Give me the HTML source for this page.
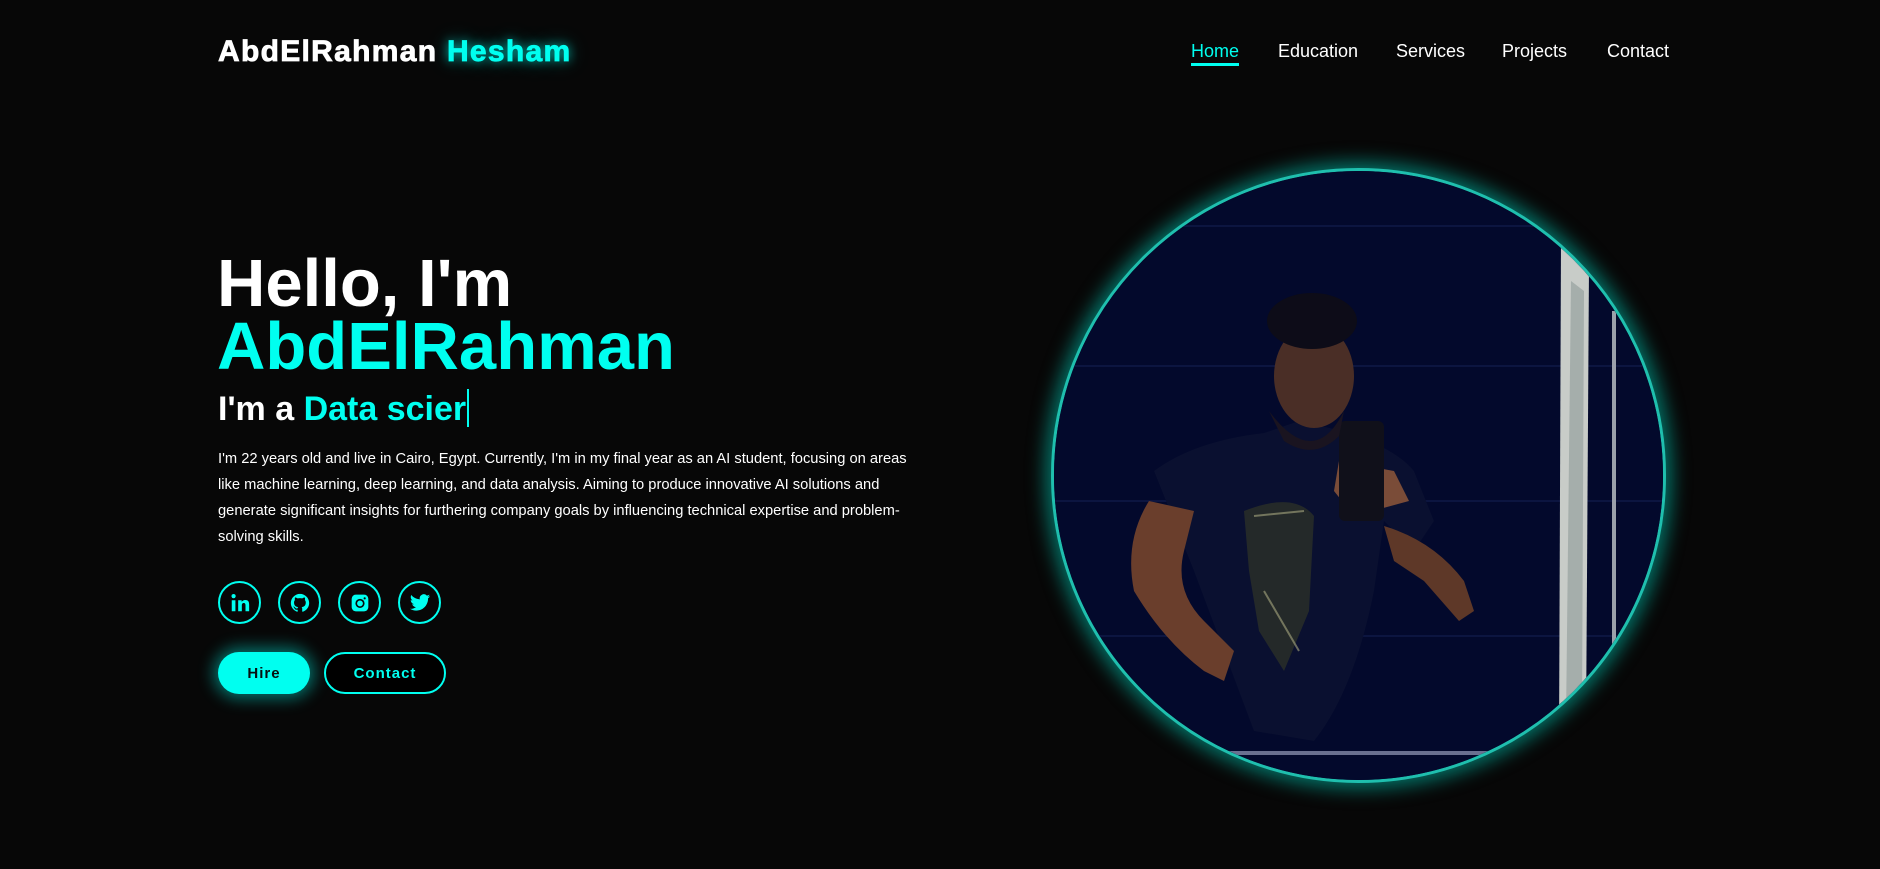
<!DOCTYPE html>
<html><head><meta charset="utf-8"><style>
*{margin:0;padding:0;box-sizing:border-box}
body{width:1880px;height:869px;background:#070707;font-family:"Liberation Sans",Arial,sans-serif;position:relative;overflow:hidden;color:#fff}
.logo{position:absolute;left:218px;top:35px;font-size:30px;font-weight:bold;white-space:nowrap;letter-spacing:1.3px;-webkit-text-stroke:0.8px currentColor}
.logo span{color:#00fff0;text-shadow:0 0 10px rgba(0,255,240,.7),0 0 20px rgba(0,255,240,.4)}
.nav a{position:absolute;top:41px;font-size:18px;color:#fff;text-decoration:none}
.nav a.act{color:#00fff0}
.nav a.act:after{content:"";position:absolute;left:0;right:0;top:22px;height:3px;background:#00fff0}
.h1{position:absolute;left:217px;font-size:67px;font-weight:bold;white-space:nowrap;line-height:1}
.sub{position:absolute;left:218px;top:389px;font-size:34px;font-weight:bold;white-space:nowrap}
.sub span{color:#00fff0}
.caret{display:inline-block;width:2px;height:38px;background:#00fff0;vertical-align:-7px;margin-left:1px}
p{position:absolute;left:218px;top:446px;width:705px;font-size:14.7px;line-height:26px;color:#fff}
.ic{position:absolute;top:581px;width:43px;height:43px;border:2px solid #00fff0;border-radius:50%;display:flex;align-items:center;justify-content:center}
.btn{position:absolute;top:652px;height:42px;border-radius:21px;font-size:15px;font-weight:bold;letter-spacing:1px;display:flex;align-items:center;justify-content:center}
.photo{position:absolute;left:1051px;top:168px;width:615px;height:615px;border-radius:50%;border:3px solid #1fbfae;box-shadow:0 0 18px 6px rgba(0,200,180,.55);overflow:hidden;background:#040a2e}
</style></head><body>
<div class="logo">AbdElRahman <span>Hesham</span></div>
<div class="nav">
<a class="act" style="left:1191px">Home</a>
<a style="left:1278px">Education</a>
<a style="left:1396px">Services</a>
<a style="left:1502px">Projects</a>
<a style="left:1607px">Contact</a>
</div>
<div class="h1" style="top:250px">Hello, I'm</div>
<div class="h1" style="top:313px;color:#00fff0">AbdElRahman</div>
<div class="sub">I'm a <span>Data scier</span><i class="caret"></i></div>
<p>I'm 22 years old and live in Cairo, Egypt. Currently, I'm in my final year as an AI student, focusing on areas like machine learning, deep learning, and data analysis. Aiming to produce innovative AI solutions and generate significant insights for furthering company goals by influencing technical expertise and problem-solving skills.</p>

<div class="ic" style="left:218px"><svg width="22" height="22" viewBox="0 0 24 24" fill="#00fff0"><rect x="3" y="9" width="4" height="12"/><circle cx="5" cy="4.5" r="2.3"/><path d="M10 9h3.8v1.8c.6-1.1 2-2.1 4-2.1 3.4 0 4.2 2.2 4.2 5.2V21h-4v-6.2c0-1.5-.3-2.8-1.9-2.8s-2.1 1.2-2.1 2.8V21h-4z"/></svg></div>
<div class="ic" style="left:278px"><svg width="22" height="22" viewBox="0 0 24 24" fill="#00fff0"><path d="M12 2C6.5 2 2 6.5 2 12c0 4.4 2.9 8.2 6.8 9.5.5.1.7-.2.7-.5v-1.7c-2.8.6-3.4-1.3-3.4-1.3-.5-1.2-1.1-1.5-1.1-1.5-.9-.6.1-.6.1-.6 1 .1 1.5 1 1.5 1 .9 1.5 2.4 1.1 2.9.8.1-.7.4-1.1.6-1.300-2.2-.3-4.6-1.1-4.6-5 0-1.1.4-2 1-2.7-.1-.3-.4-1.3.1-2.7 0 0 .8-.3 2.8 1 .8-.2 1.7-.3 2.5-.3s1.7.1 2.5.3c1.900-1.3 2.8-1 2.8-1 .5 1.4.2 2.4.1 2.7.6.7 1 1.6 1 2.7 0 3.9-2.4 4.7-4.6 5 .4.3.7.9.7 1.9V21c0 .3.2.6.7.5C19.1 20.2 22 16.4 22 12 22 6.5 17.5 2 12 2z"/></svg></div>
<div class="ic" style="left:338px"><svg width="20" height="20" viewBox="0 0 24 24"><rect x="2" y="2" width="20" height="20" rx="5" fill="#00fff0"/><circle cx="12" cy="12.5" r="4.5" fill="none" stroke="#070707" stroke-width="2"/><circle cx="17.6" cy="6.4" r="1.3" fill="#070707"/></svg></div>
<div class="ic" style="left:398px"><svg width="22" height="22" viewBox="0 0 24 24" fill="#00fff0"><path d="M23 4.6c-.8.4-1.7.6-2.6.7.9-.6 1.6-1.4 2-2.5-.9.5-1.9.9-2.9 1.1a4.5 4.5 0 0 0-7.7 4.1C8 7.8 4.7 6 2.5 3.3c-1.2 2.1-.5 4.7 1.4 6-.7 0-1.4-.2-2-.6 0 2.2 1.5 4.1 3.6 4.5-.7.2-1.4.2-2 .1.6 1.8 2.3 3.1 4.2 3.1A9 9 0 0 1 1 18.3 12.8 12.8 0 0 0 7.9 20.3c8.3 0 12.9-6.9 12.9-12.9v-.6c.9-.6 1.6-1.4 2.2-2.2z"/></svg></div>

<div class="btn" style="left:218px;width:92px;background:#00fff0;color:#071010;box-shadow:0 0 16px 4px rgba(0,255,240,.45)">Hire</div>
<div class="btn" style="left:324px;width:122px;border:2px solid #00fff0;color:#00fff0;background:#000">Contact</div>

<div class="photo">
<svg width="615" height="615" viewBox="0 0 615 615">
<rect width="615" height="615" fill="#03092c"/>
<g stroke="#0c1540" stroke-width="2"><line x1="0" y1="55" x2="615" y2="55"/><line x1="0" y1="195" x2="615" y2="195"/><line x1="0" y1="330" x2="615" y2="330"/><line x1="0" y1="465" x2="615" y2="465"/></g>
<path d="M507 68 L535 95 L532 560 L505 575 Z" fill="#c8ccc8"/>
<path d="M517 110 L530 120 L528 540 L512 550 Z" fill="#8d9a98" opacity=".6"/>
<rect x="558" y="140" width="4" height="360" fill="#9aa0aa"/>
<rect x="150" y="580" width="320" height="4" fill="#6a7090"/>
<path d="M100 300 Q140 270 210 262 L245 250 L280 258 Q340 275 360 300 L380 350 L360 380 L330 350 L320 420 Q300 520 260 570 L200 560 L170 480 L140 400 Z" fill="#0a1030"/>
<path d="M95 330 Q70 370 80 420 Q110 470 150 500 L170 510 L180 480 L150 450 Q120 420 130 380 L140 340 Z" fill="#6a3e2c"/>
<path d="M330 355 Q380 370 410 410 L420 440 L405 450 L370 410 L340 390 Z" fill="#5e3828"/>
<path d="M285 290 L340 300 L355 330 L300 345 L280 320Z" fill="#7a4c38"/>
<rect x="285" y="250" width="45" height="100" rx="6" fill="#10101a"/>
<ellipse cx="260" cy="205" rx="40" ry="52" fill="#4a2e26"/>
<ellipse cx="258" cy="150" rx="45" ry="28" fill="#0d0c18"/>
<path d="M215 240 Q260 300 290 240 L285 265 Q260 290 230 270Z" fill="#1a1420"/>
<path d="M190 340 Q240 320 260 345 L255 440 L230 500 L205 460 L195 400Z" fill="#2a2f28" opacity=".8"/>
<path d="M200 345 L250 340 M210 420 L245 480" stroke="#a8a880" stroke-width="2" fill="none" opacity=".6"/>
</svg>
</div>
</body></html>
